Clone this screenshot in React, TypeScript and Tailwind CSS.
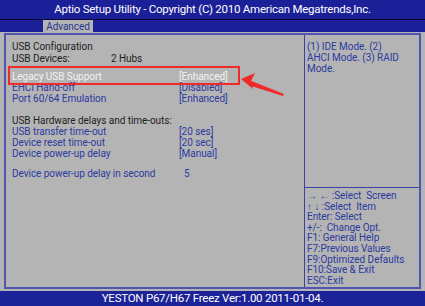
const LEFT_ROWS = [
  { label: 'USB transfer time-out', value: '[20 ses]' },
  { label: 'Device reset time-out', value: '[20 sec]' },
  { label: 'Device power-up delay', value: '[Manual]' },
]

const HELP = [
  '\u2192 \u2190 :Select  Screen',
  '\u2191 \u2193 :Select  Item',
  'Enter: Select',
  '+/-:  Change Opt.',
  'F1: General Help',
  'F7:Previous Values',
  'F9:Optimized Defaults',
  'F10:Save & Exit',
  'ESC:Exit',
]

export default function App() {
  return (
    <div
      className="relative flex h-[306px] w-[425px] flex-col overflow-hidden bg-[#b4b4b4] text-[10px] leading-[11px] tracking-[-0.05px]"
      style={{ fontFamily: 'Roboto, "Noto Sans", sans-serif' }}
    >
      {/* title */}
      <div className="flex h-[19px] items-center justify-center bg-[#1b1f98] text-[11.5px] tracking-[-0.25px] text-white">
        Aptio Setup Utility - Copyright (C) 2010 American Megatrends,Inc.
      </div>
      <div className="h-px bg-[#0a0a30]" />
      <div className="flex h-[12px] bg-[#1b1f98] pl-[43px]">
        <div className="flex w-[50px] items-center justify-center bg-[#b4b4b4] text-[#2b3490]">Advanced</div>
      </div>

      {/* body */}
      <div className="flex flex-1 px-[4px] pt-px pb-[2px]">
        <div className="flex flex-1 border-2 border-[#5056ae]">
          <div className="w-[299px] border-r border-[#3c42a0] pl-[6px] pt-[6px]">
            <div className="text-[#1e1e1e]">USB Configuration</div>
            <div className="mt-[1px] flex text-[#1e1e1e]">
              <span className="w-[99px]">USB Devices:</span>
              <span>2 Hubs</span>
            </div>
            <div className="mt-[7px] flex text-[#f2f2f2]">
              <span className="w-[167px]">Legacy USB Support</span>
              <span>[Enhanced]</span>
            </div>
            <div className="flex text-[#2b3aa0]">
              <span className="w-[167px]">EHCI Hand-off</span>
              <span>[Disabled]</span>
            </div>
            <div className="flex text-[#2b3aa0]">
              <span className="w-[167px]">Port 60/64 Emulation</span>
              <span>[Enhanced]</span>
            </div>
            <div className="mt-[11px] text-[#1e1e1e]">USB Hardware delays and time-outs:</div>
            {LEFT_ROWS.map((r) => (
              <div key={r.label} className="flex text-[#2b3aa0]">
                <span className="w-[167px]">{r.label}</span>
                <span>{r.value}</span>
              </div>
            ))}
            <div className="mt-[9px] flex text-[#2b3aa0]">
              <span className="w-[172px]">Device power-up delay in second</span>
              <span>5</span>
            </div>
          </div>

          <div className="flex flex-1 flex-col">
            <div className="h-[153px] border-b border-[#3c42a0] pl-[2px] pt-[6px] text-[#2b3aa0]">
              <div>(1) IDE Mode. (2)</div>
              <div>AHCI Mode. (3) RAID</div>
              <div>Mode.</div>
            </div>
            <div className="pl-[2px] pt-[3px] text-[#2b3aa0] leading-[10.6px]">
              {HELP.map((h) => (
                <div key={h} className="whitespace-pre">{h}</div>
              ))}
            </div>
          </div>
        </div>
      </div>

      {/* footer */}
      <div className="flex h-[15px] items-center justify-center bg-[#1c2298] text-[11.5px] tracking-[-0.25px] text-white">
        YESTON P67/H67 Freez Ver:1.00 2011-01-04.
      </div>

      {/* red highlight + arrow */}
      <div className="absolute left-[8px] top-[66px] h-[19px] w-[232px] border-[2.5px] border-[#ee2a2a]" />
      <svg className="absolute left-0 top-0" width="425" height="306">
        <polygon points="249,80 284,94 283,96 248,85" fill="#ee2a2a" />
        <polygon points="241,79 255,73 251,81 253,89" fill="#ee2a2a" />
      </svg>
    </div>
  )
}
